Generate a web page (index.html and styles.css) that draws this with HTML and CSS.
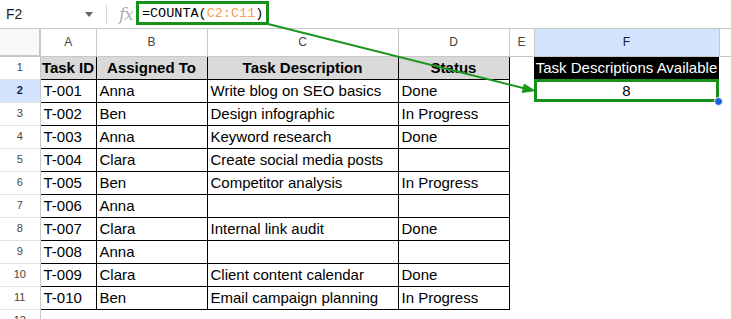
FILE: index.html
```html
<!DOCTYPE html>
<html lang="en">
<head>
<meta charset="UTF-8" />
<title>COUNTA - Task Descriptions</title>
<link rel="stylesheet" href="styles.css">
</head>
<body>
<div class="app">

  <div class="formula-bar">
    <div class="name-box">F2<span class="caret"></span></div>
    <span class="divider"></span>
    <span class="fx">fx</span>
    <div class="formula">=COUNTA(<span class="ref">C2:C11</span>)</div>
  </div>

  <table class="sheet">
    <colgroup>
      <col class="c-row">
      <col class="c-a">
      <col class="c-b">
      <col class="c-c">
      <col class="c-d">
      <col class="c-e">
      <col class="c-f">
      <col>
    </colgroup>
    <thead>
      <tr>
        <th class="corner"></th>
        <th>A</th><th>B</th><th>C</th><th>D</th><th>E</th>
        <th class="active">F</th>
        <th class="rest"></th>
      </tr>
    </thead>
    <tbody>
      <tr>
        <th>1</th>
        <td class="t head">Task ID</td>
        <td class="t head">Assigned To</td>
        <td class="t head">Task Description</td>
        <td class="t head">Status</td>
        <td></td>
        <td class="label">Task Descriptions Available</td>
        <td></td>
      </tr>
      <tr>
        <th class="active">2</th>
        <td class="t">T-001</td><td class="t">Anna</td><td class="t">Write blog on SEO basics</td><td class="t">Done</td>
        <td></td><td class="result">8</td><td></td>
      </tr>
      <tr>
        <th>3</th>
        <td class="t">T-002</td><td class="t">Ben</td><td class="t">Design infographic</td><td class="t">In Progress</td>
        <td></td><td></td><td></td>
      </tr>
      <tr>
        <th>4</th>
        <td class="t">T-003</td><td class="t">Anna</td><td class="t">Keyword research</td><td class="t">Done</td>
        <td></td><td></td><td></td>
      </tr>
      <tr>
        <th>5</th>
        <td class="t">T-004</td><td class="t">Clara</td><td class="t">Create social media posts</td><td class="t"></td>
        <td></td><td></td><td></td>
      </tr>
      <tr>
        <th>6</th>
        <td class="t">T-005</td><td class="t">Ben</td><td class="t">Competitor analysis</td><td class="t">In Progress</td>
        <td></td><td></td><td></td>
      </tr>
      <tr>
        <th>7</th>
        <td class="t">T-006</td><td class="t">Anna</td><td class="t"></td><td class="t"></td>
        <td></td><td></td><td></td>
      </tr>
      <tr>
        <th>8</th>
        <td class="t">T-007</td><td class="t">Clara</td><td class="t">Internal link audit</td><td class="t">Done</td>
        <td></td><td></td><td></td>
      </tr>
      <tr>
        <th>9</th>
        <td class="t">T-008</td><td class="t">Anna</td><td class="t"></td><td class="t"></td>
        <td></td><td></td><td></td>
      </tr>
      <tr>
        <th>10</th>
        <td class="t">T-009</td><td class="t">Clara</td><td class="t">Client content calendar</td><td class="t">Done</td>
        <td></td><td></td><td></td>
      </tr>
      <tr>
        <th>11</th>
        <td class="t">T-010</td><td class="t">Ben</td><td class="t">Email campaign planning</td><td class="t">In Progress</td>
        <td></td><td></td><td></td>
      </tr>
      <tr class="last">
        <th>12</th>
        <td></td><td></td><td></td><td></td><td></td><td></td><td></td>
      </tr>
    </tbody>
  </table>

  <!-- стрелка от формулы к ячейке F2 -->
  <svg class="arrow" width="731" height="319" viewBox="0 0 731 319">
    <line x1="268" y1="24" x2="526" y2="88.8" stroke="#1a961a" stroke-width="2" />
    <polygon points="536,91 524,83.5 521.5,93" fill="#1a961a" />
  </svg>
  <span class="fill-handle"></span>
</div>
</body>
</html>
```

FILE: styles.css
```css
* {
  box-sizing: border-box;
}
body {
  margin: 0;
  background: #fff;
  font-family: 'Liberation Sans', Arial, sans-serif;
  color: #000;
  overflow: hidden;
}
.app {
  position: relative;
  width: 731px;
  height: 319px;
  overflow: hidden;
}

/* строка формул */
.formula-bar {
  height: 29px;
  display: flex;
  align-items: center;
  border-bottom: 1px solid #c7c7c7;
}
.name-box {
  width: 106px;
  display: flex;
  align-items: center;
  justify-content: space-between;
  padding: 0 13px 0 6px;
  font-size: 14px;
  color: #1f1f1f;
}
.caret {
  width: 0;
  height: 0;
  border-left: 4px solid transparent;
  border-right: 4px solid transparent;
  border-top: 5px solid #5f6368;
}
.divider {
  width: 1px;
  height: 19px;
  background: #d5d5d5;
}
.fx {
  margin: 0 3px 0 12px;
  font-family: 'DejaVu Serif', serif;
  font-style: italic;
  font-size: 17px;
  color: #b0b0b0;
  letter-spacing: -1px;
}
.formula {
  height: 24px;
  margin-top: -3px;
  padding: 1px 3px 0 3px;
  border: 3px solid #16911a;
  font-family: 'Liberation Mono', monospace;
  font-size: 13.5px;
  line-height: 17px;
  color: #000;
}
.formula .ref {
  color: #f5a050;
}

/* таблица */
.sheet {
  border-collapse: collapse;
  table-layout: fixed;
  width: 731px;
}
.c-row { width: 40px; }
.c-a { width: 56px; }
.c-b { width: 111px; }
.c-c { width: 191px; }
.c-d { width: 111px; }
.c-e { width: 25px; }
.c-f { width: 185px; }

.sheet thead th {
  height: 27px;
  padding: 0;
  font-size: 12px;
  font-weight: normal;
  color: #444;
  background: #fff;
  border-left: 1px solid #c7c7c7;
  border-bottom: 1px solid #c7c7c7;
}
.sheet thead th.corner {
  background: #f8f9fa;
  border-left: none;
  border-right: 2px solid #c7c7c7;
  border-bottom: 2px solid #c7c7c7;
}
.sheet thead th.active {
  background: #d3e3fd;
  color: #0b1f44;
}
.sheet tbody tr {
  height: 23px;
}
.sheet tbody th {
  padding: 0 0 2px;
  font-size: 11px;
  font-weight: normal;
  color: #444;
  background: #fff;
  border-right: 1px solid #c7c7c7;
  border-bottom: 1px solid #e3e3e3;
}
.sheet tbody tr.last th {
  vertical-align: top;
  padding: 4px 0 0;
}
.sheet tbody th.active {
  background: #d3e3fd;
  font-weight: bold;
  color: #0b1f44;
}
.sheet td {
  padding: 0 3px;
  font-size: 15px;
  white-space: nowrap;
  overflow: hidden;
}
.sheet td.t {
  border: 1px solid #000;
}
.sheet td.head {
  background: #d9d9d9;
  font-weight: bold;
  text-align: center;
  padding: 0 1px;
  overflow: visible;
}
.sheet td.label {
  background: #000;
  color: #fff;
  text-align: center;
  padding: 0;
  overflow: visible;
}
.sheet td.result {
  text-align: center;
  box-shadow: inset 0 0 0 3px #16911a, -2px 0 0 #1a73e8;
}

.arrow {
  position: absolute;
  left: 0;
  top: 0;
  pointer-events: none;
}
.fill-handle {
  position: absolute;
  left: 714px;
  top: 97px;
  width: 9px;
  height: 9px;
  border-radius: 50%;
  background: #1a5fe0;
  border: 1px solid #fff;
}
```
